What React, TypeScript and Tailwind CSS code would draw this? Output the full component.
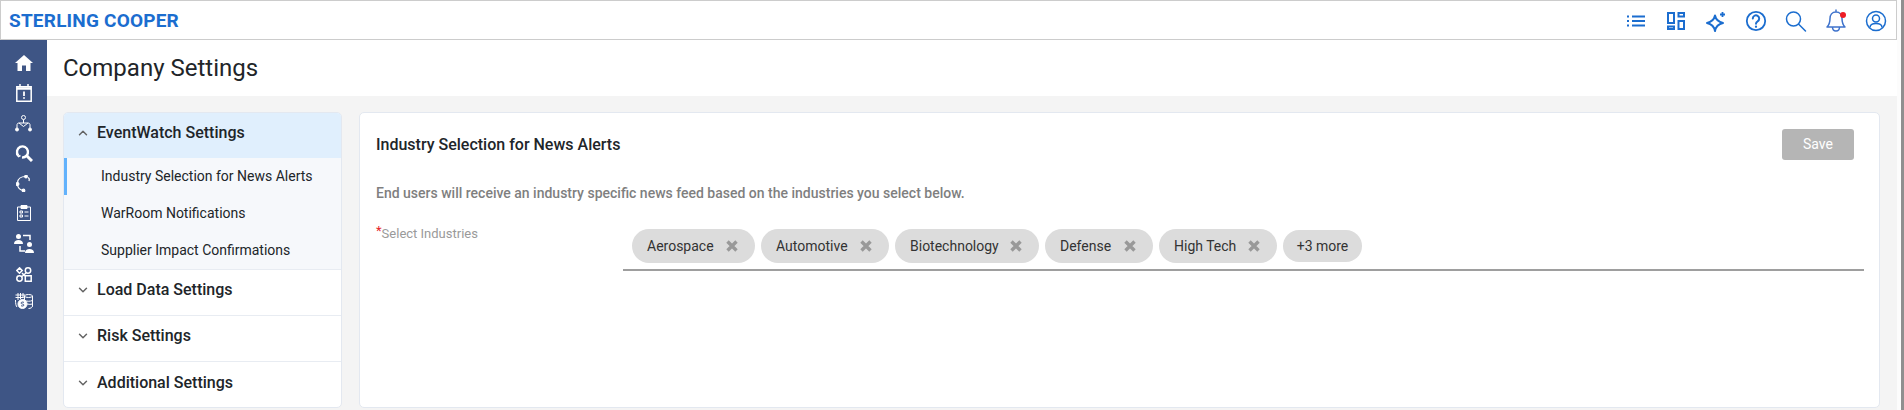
import React from "react";
import { ChevronDown, ChevronUp } from "lucide-react";

const industries = [
  { label: "Aerospace", width: "w-[123px]" },
  { label: "Automotive", width: "w-[128px]" },
  { label: "Biotechnology", width: "w-[144px]" },
  { label: "Defense", width: "w-[108px]" },
  { label: "High Tech", width: "w-[118px]" },
];

function TopIcons() {
  return (
    <div className="flex items-center gap-[16px] text-[#1b6dcf]">
      <svg width="24" height="24" viewBox="0 0 24 24" fill="none" stroke="currentColor" strokeWidth="2">
        <path d="M3 7.500h2M8 7.500h13M3 12h2M8 12h13M3 16.500h2M8 16.500h13" />
      </svg>
      <svg width="24" height="24" viewBox="0 0 24 24" fill="none" stroke="currentColor" strokeWidth="2">
        <path d="M4 4h6v10H4zM14.500 4H20v3.500h-5.500zM14.500 12H20v8h-5.500zM4 17.500h6V20H4z" />
      </svg>
      <svg width="24" height="24" viewBox="0 0 24 24" fill="none" stroke="currentColor" strokeWidth="2" strokeLinejoin="round">
        <path d="M11 6.500c.8 3.800 3 6.300 8 7.500-5 1.200-7.200 3.500-8 8-.8-4.500-3-6.800-8-8 5-1.200 7.200-3.700 8-7.500z" />
        <path d="M18.500 3v5M16 5.500h5" strokeWidth="1.800" />
      </svg>
      <svg width="24" height="24" viewBox="0 0 24 24" fill="none" stroke="currentColor" strokeWidth="1.800" strokeLinecap="round">
        <circle cx="12" cy="12" r="9.200" />
        <path d="M8.800 9.500a3.200 3.200 0 1 1 4.800 2.800c-1 .6-1.600 1.200-1.600 2.400" strokeWidth="2" />
        <path d="M12 17.500v.3" strokeWidth="2.200" />
      </svg>
      <svg width="24" height="24" viewBox="0 0 24 24" fill="none" stroke="currentColor" strokeWidth="1.500" strokeLinecap="round">
        <circle cx="9.500" cy="10" r="7" />
        <path d="M14.500 15l7 7" />
      </svg>
      <div className="relative w-6 h-6">
        <svg width="24" height="24" viewBox="0 0 24 24" fill="none" stroke="#3f73cc" strokeWidth="1.500" strokeLinejoin="round">
          <path d="M12 .5v2.500M12 3c-4 0-6 3-6 6.500 0 4-1 6.500-3 8.500h18c-2-2-3-4.500-3-8.500 0-3.500-2-6.500-6-6.500z" />
          <path d="M8.500 18c0 2.500 1.500 4 3.500 4s3.500-1.500 3.500-4" />
        </svg>
        <span className="absolute top-[3px] left-[16px] w-[6px] h-[6px] rounded-full bg-[#ee1c25]" />
      </div>
      <svg width="24" height="24" viewBox="0 0 24 24" fill="none" stroke="currentColor" strokeWidth="1.500">
        <circle cx="12" cy="12" r="9.500" />
        <circle cx="12" cy="9.500" r="3.500" />
        <path d="M6 18.500c0-2.800 2.500-4 6-4s6 1.200 6 4" />
      </svg>
    </div>
  );
}

function SideIcon({ children, height }: { children: React.ReactNode; height: string }) {
  return <div className={`${height} w-full flex items-center justify-center`}>{children}</div>;
}

function SideIcons() {
  return (
    <div className="flex flex-col items-center pt-[8px] text-white">
      <SideIcon height="h-[30px]">
        <svg width="18" height="16" viewBox="0 0 18 16" fill="currentColor">
          <path d="M9 0l9 8h-2.500v8H11v-5.500H7V16H2.500V8H0z" />
        </svg>
      </SideIcon>
      <SideIcon height="h-[30px]">
        <svg width="16" height="18" viewBox="0 0 16 18" fill="none" stroke="currentColor" strokeWidth="1.500">
          <path d="M.8 2.800h14.400v14.400H.8z" />
          <path d="M1 4.500h14" strokeWidth="2.500" />
          <path d="M4 0v3M12 0v3" />
          <path d="M8 7.500v4.500M8 13.200v1.600" strokeWidth="1.800" />
        </svg>
      </SideIcon>
      <SideIcon height="h-[30px]">
        <svg width="17" height="17" viewBox="0 0 17 17" fill="none" stroke="currentColor" strokeWidth="1">
          <circle cx="8.500" cy="2.500" r="2" />
          <path d="M8.500 4.500V8M2 13V9.800c0-1 .8-1.800 2-1.800h9c1.200 0 2 .8 2 1.800V13" />
          <path d="M4 8l4.500 3.500L13 8" />
          <circle cx="2" cy="14.500" r="1.500" fill="currentColor" />
          <circle cx="15" cy="14.500" r="1.500" fill="currentColor" />
        </svg>
      </SideIcon>
      <SideIcon height="h-[30px]">
        <svg width="18" height="18" viewBox="0 0 18 18" fill="none" stroke="currentColor" strokeWidth="2.400">
          <path d="M3.300 11.500a5.500 5.500 0 1 1 3.700 1.900" />
          <path d="M11 11l6 6" strokeWidth="3" />
          <path d="M1.500 10l2 2.500 2-1" strokeWidth="1.500" />
        </svg>
      </SideIcon>
      <SideIcon height="h-[30px]">
        <svg width="15" height="17" viewBox="0 0 15 17" fill="none" stroke="currentColor" strokeWidth="1.200">
          <path d="M9.500 1.500C5 1.500 2 4 1.500 7.500M1.500 10c.5 3 3 5 5.500 5.500M12 2.500c1.200 .5 1.500 2 1 3.500" />
          <circle cx="10" cy="1.500" r="1.300" fill="currentColor" />
          <circle cx="1.500" cy="9" r="1.400" fill="currentColor" />
          <circle cx="7.500" cy="15.500" r="1.300" fill="currentColor" />
        </svg>
      </SideIcon>
      <SideIcon height="h-[30px]">
        <svg width="14" height="16" viewBox="0 0 14 16" fill="none" stroke="currentColor" strokeWidth="1">
          <path d="M.5 2h13v13.500H.5z" />
          <path d="M4 .5h6v3H4z" fill="currentColor" />
          <path d="M3 6h2.500v2H3zM3 10h2.500v2H3zM7.500 7h4M7.500 11h4" />
        </svg>
      </SideIcon>
      <SideIcon height="h-[31px]">
        <svg width="20" height="19" viewBox="0 0 20 19" fill="currentColor">
          <circle cx="4.500" cy="2.500" r="2.500" />
          <path d="M0 10c0-3 2-4 4.500-4S9 7 9 10z" />
          <circle cx="15.500" cy="10.500" r="2.500" />
          <path d="M11 19c0-3 2-4 4.500-4s4.500 1 4.500 4z" />
          <path d="M9 1.500h7V6M11 17H6v-5" fill="none" stroke="currentColor" strokeWidth="1.500" />
        </svg>
      </SideIcon>
      <SideIcon height="h-[31px]">
        <svg width="16" height="15" viewBox="0 0 16 15" fill="none" stroke="currentColor" strokeWidth="1.500">
          <path d="M3.500.9l2.700 2.700-2.700 2.700L.8 3.600z" />
          <circle cx="12" cy="3.500" r="2.700" />
          <circle cx="3.500" cy="11.500" r="2.700" />
          <path d="M9.300 8.800h5.900v5.400H9.300zM6 6l3 3M10 6l-4 3.500" />
        </svg>
      </SideIcon>
      <SideIcon height="h-[22px]">
        <svg width="18" height="16" viewBox="0 0 18 16" fill="none" stroke="currentColor" strokeWidth="1">
          <path d="M3 0v7M5.500 0v6M8 0v5M.5 2H10M.5 4.500h8M.5 7C.5 11 1 13 2 14" />
          <ellipse cx="13.500" cy="3" rx="4" ry="1.500" />
          <path d="M9.500 3v11M17.500 3v10c0 1.500-2 2.500-4 2.500M10 7.500c2 1 5 1 7.500 0M12 11c2 .5 4 .5 5.500 0" />
          <circle cx="7.500" cy="11" r="4.500" fill="currentColor" />
          <path d="M9 9.500c-1-.8-3-.5-3 .6s3 .8 3 1.900-2 1.400-3 .6" stroke="#3e5585" />
        </svg>
      </SideIcon>
    </div>
  );
}

export default function App() {
  return (
    <div className="w-[1904px] h-[410px] overflow-hidden bg-[#fcfcfc] flex font-['Roboto',sans-serif]">
      <div className="w-[1897px] shrink-0 flex flex-col">
        <header className="h-[40px] shrink-0 bg-white border border-[#cccccc] flex items-center justify-between pl-[8px] pr-[8px] pt-[2px]">
          <span className="text-[19px] font-bold text-[#1b6dcf] tracking-[0.2px]">STERLING COOPER</span>
          <TopIcons />
        </header>
        <div className="flex flex-1 min-h-0">
          <aside className="w-[47px] shrink-0 bg-[#3e5585]">
            <SideIcons />
          </aside>
          <main className="flex-1 flex flex-col min-w-0 bg-[#f4f4f4]">
            <div className="h-[56px] shrink-0 bg-white flex items-center pl-[16px]">
              <h1 className="text-[24px] font-normal text-[#212529]">Company Settings</h1>
            </div>
            <div className="flex gap-[17px] pt-[16px] pl-[16px] pr-[17px] flex-1 min-h-0">
              <nav className="w-[279px] h-[296px] shrink-0 bg-white rounded-[5px] border border-[#e3e8f0] overflow-hidden">
                <div className="h-[45px] bg-[#e0effd] flex items-center gap-[7px] pl-[12px] pb-[5px] text-[#212529]">
                  <ChevronUp size={14} strokeWidth={2.500} className="text-[#666666]" />
                  <span className="text-[16px] font-medium">EventWatch Settings</span>
                </div>
                <div className="bg-[#f6f8fb] border-b border-[#e8ecf2]">
                  {["Industry Selection for News Alerts", "WarRoom Notifications", "Supplier Impact Confirmations"].map((item, i) => (
                    <div
                      key={item}
                      className={`h-[37px] flex items-center pl-[34px] text-[14px] text-[#212529] border-l-[3px] ${i === 0 ? "border-[#62b2fc]" : "border-transparent"}`}
                    >
                      {item}
                    </div>
                  ))}
                </div>
                {["Load Data Settings", "Risk Settings", "Additional Settings"].map((item, i) => (
                  <div
                    key={item}
                    className={`h-[46px] flex items-center gap-[7px] pl-[12px] pb-[5px] text-[#212529] ${i < 2 ? "border-b border-[#e8ecf2]" : ""}`}
                  >
                    <ChevronDown size={14} strokeWidth={2.500} className="text-[#666666]" />
                    <span className="text-[16px] font-medium">{item}</span>
                  </div>
                ))}
              </nav>
              <section className="flex-1 h-[296px] bg-white rounded-[5px] border border-[#e3e8f0] px-[16px]">
                <div className="flex items-start justify-between pt-[16px] pr-[9px]">
                  <h2 className="text-[16px] font-medium text-[#212529] leading-[31px]">Industry Selection for News Alerts</h2>
                  <button className="w-[72px] h-[31px] rounded-[3px] bg-[#b5b5b5] text-white text-[14px]">Save</button>
                </div>
                <p className="mt-[23px] text-[14px] font-medium text-[#7f7f7f]">
                  End users will receive an industry specific news feed based on the industries you select below.
                </p>
                <div className="flex mt-[20px]">
                  <label className="w-[247px] shrink-0 text-[13px] text-[#9a9a9a] leading-[20px]">
                    <span className="text-[#e5252a] relative top-[-3px]">*</span>Select Industries
                  </label>
                  <div className="flex-1 mr-[-1px] h-[42px] mt-[5px] border-b-2 border-[#9e9e9e] flex items-start gap-[6px] pl-[9px]">
                    {industries.map((item) => (
                      <div
                        key={item.label}
                        className={`${item.width} h-[34px] rounded-full bg-[#dcdcdc] flex items-center justify-between pl-[15px] pr-[17px] text-[14px] text-[#333333]`}
                      >
                        <span>{item.label}</span>
                        <svg width="12" height="12" viewBox="0 0 12 12" stroke="#999999" strokeWidth="3.400">
                          <path d="M1.500 1.500l9 9M10.500 1.500l-9 9" />
                        </svg>
                      </div>
                    ))}
                    <div className="w-[79px] h-[32px] mt-[1px] rounded-full bg-[#dcdcdc] flex items-center justify-center text-[14px] text-[#333333]">+3 more</div>
                  </div>
                </div>
              </section>
            </div>
          </main>
        </div>
      </div>
      <div className="flex-1" />
      <div className="w-[3px] shrink-0 bg-[#8f8f8f]" />
    </div>
  );
}
